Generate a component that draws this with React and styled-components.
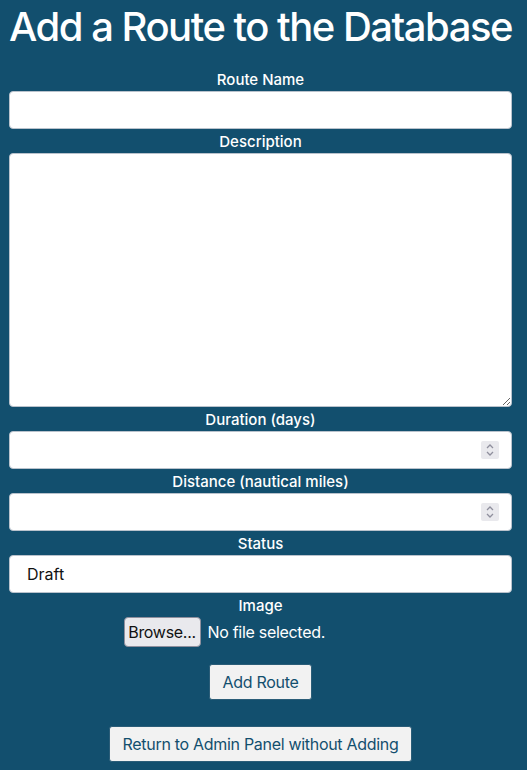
import React from "react";
import styled, { createGlobalStyle } from "styled-components";

const Global = createGlobalStyle`
  html, body { margin: 0; padding: 0; background: #124f6e; }
  body { font-family: Inter, "Noto Sans", sans-serif; color: #fff; }
`;

const Page = styled.div`
  width: 503px;
  margin-left: 9px;
  display: flex;
  flex-direction: column;
  align-items: stretch;
`;

const Title = styled.h1`
  margin: 3px 0 16px;
  font-size: 40px;
  line-height: 48px;
  font-weight: 500;
  text-align: center;
  letter-spacing: -1.5px;
  white-space: nowrap;
`;

const Form = styled.form`
  display: flex;
  flex-direction: column;
`;

const Label = styled.label`
  display: block;
  height: 24px;
  line-height: 26px;
  font-size: 15px;
  font-weight: 500;
  text-align: center;
`;

const fieldBase = `
  box-sizing: border-box;
  width: 100%;
  border: 1px solid #b9c2cc;
  border-radius: 4px;
  background: #fff;
  font-family: Inter, "Noto Sans", sans-serif;
  font-size: 16px;
  color: #111;
  outline: none;
`;

const Input = styled.input`
  ${fieldBase}
  height: 38px;
  padding: 0 16px;
`;

const TextArea = styled.textarea`
  ${fieldBase}
  display: block;
  height: 254px;
  padding: 8px 16px;
  resize: vertical;
`;

const NumberWrap = styled.div`
  position: relative;
`;

const Spinner = styled.div`
  position: absolute;
  right: 13px;
  top: 10px;
  width: 18px;
  height: 18px;
  background: #e9e9ed;
  border-radius: 2px;
  display: flex;
  align-items: center;
  justify-content: center;
`;

const Select = styled.select`
  ${fieldBase}
  height: 38px;
  padding: 0 17px;
  appearance: none;
  -webkit-appearance: none;
`;

const FileRow = styled.div`
  display: flex;
  justify-content: center;
  height: 30px;
`;

const FileBox = styled.div`
  width: 274px;
  display: flex;
  align-items: center;
  gap: 7px;
`;

const BrowseButton = styled.button`
  box-sizing: border-box;
  height: 30px;
  width: 77px;
  padding: 0;
  border: 1px solid #8f8f9d;
  border-radius: 4px;
  background: #e9e9ed;
  color: #111;
  font-family: Inter, "Noto Sans", sans-serif;
  font-size: 16px;
  letter-spacing: -0.3px;
`;

const FileText = styled.span`
  font-size: 16px;
  letter-spacing: -0.3px;
  color: #fff;
`;

const ActionButton = styled.button`
  box-sizing: border-box;
  align-self: center;
  height: 36px;
  padding: 0 13px;
  border: 1px solid #2b5d78;
  border-radius: 3px;
  background: #f2f2f2;
  color: #124f6e;
  font-family: Inter, "Noto Sans", sans-serif;
  font-size: 16px;
  letter-spacing: -0.3px;
  margin-top: ${(p) => p.$top}px;
`;

const SpinIcon = () => (
  <svg width="10" height="14" viewBox="0 0 10 14" fill="none" stroke="#8f8f9d" strokeWidth="1.3">
    <path d="M2 5 L5 2 L8 5" />
    <path d="M2 9 L5 12 L8 9" />
  </svg>
);

const NumberField = ({ id }) => (
  <NumberWrap>
    <Input id={id} type="text" inputMode="numeric" />
    <Spinner>
      <SpinIcon />
    </Spinner>
  </NumberWrap>
);

export default function App() {
  return (
    <>
      <Global />
      <Page>
        <Title>Add a Route to the Database</Title>
        <Form onSubmit={(e) => e.preventDefault()}>
          <Label htmlFor="name">Route Name</Label>
          <Input id="name" type="text" />
          <Label htmlFor="desc">Description</Label>
          <TextArea id="desc" />
          <Label htmlFor="dur">Duration (days)</Label>
          <NumberField id="dur" />
          <Label htmlFor="dist">Distance (nautical miles)</Label>
          <NumberField id="dist" />
          <Label htmlFor="status">Status</Label>
          <Select id="status" defaultValue="draft">
            <option value="draft">Draft</option>
            <option value="published">Published</option>
          </Select>
          <Label>Image</Label>
          <FileRow>
            <FileBox>
              <BrowseButton type="button">Browse...</BrowseButton>
              <FileText>No file selected.</FileText>
            </FileBox>
          </FileRow>
          <ActionButton type="submit" $top={17}>Add Route</ActionButton>
          <ActionButton type="button" $top={26}>Return to Admin Panel without Adding</ActionButton>
        </Form>
      </Page>
    </>
  );
}
